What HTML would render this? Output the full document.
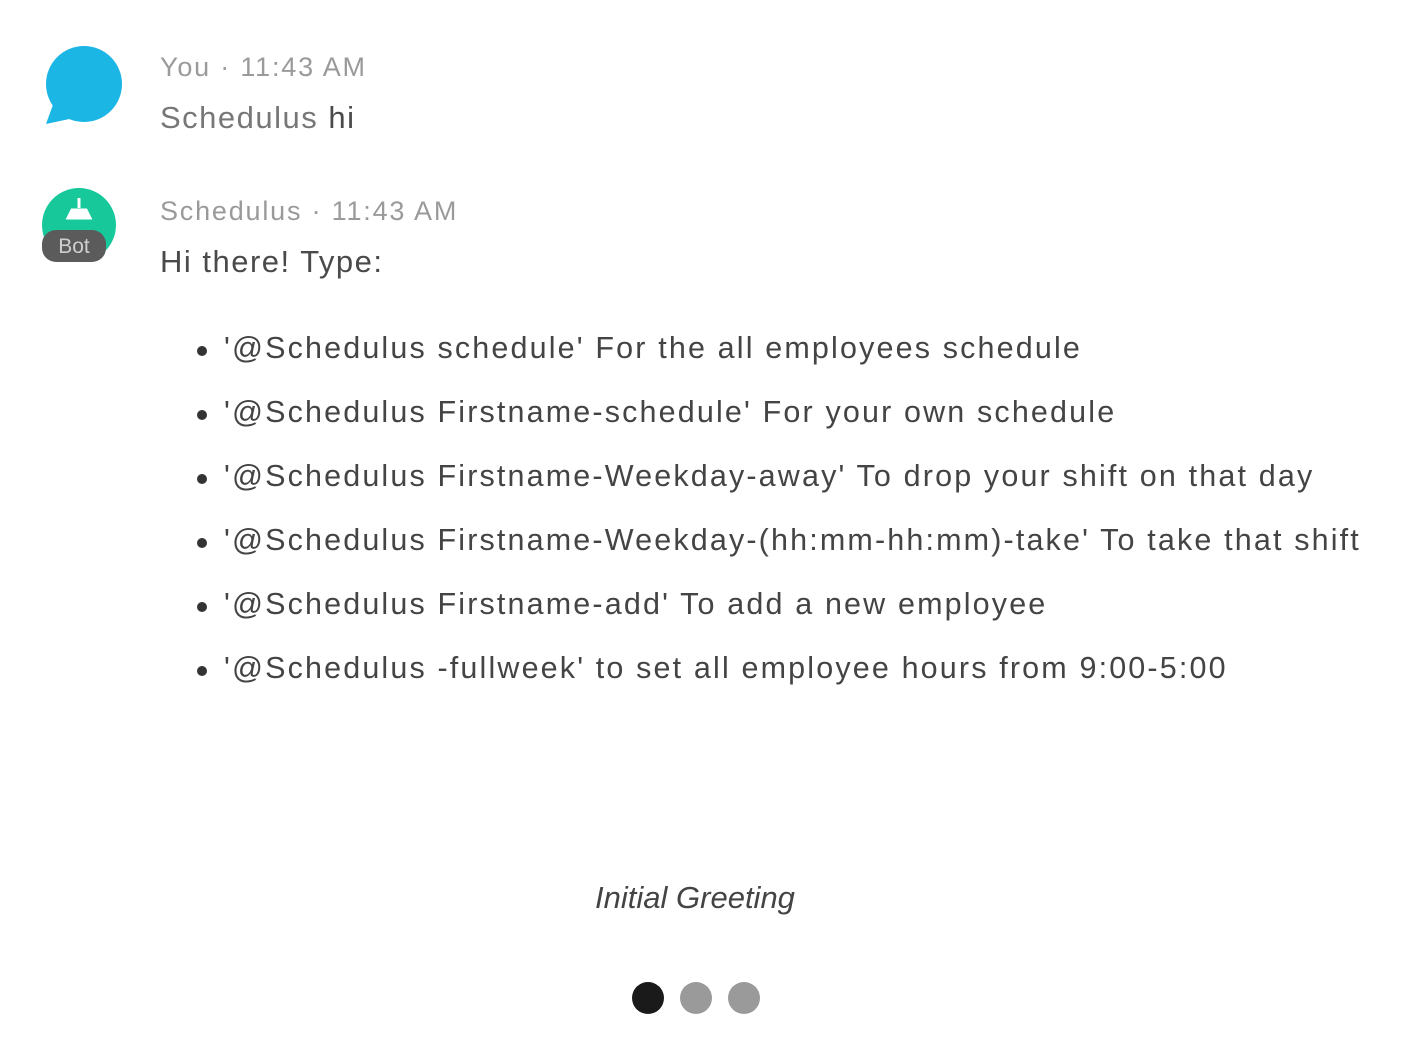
<!DOCTYPE html>
<html><head><meta charset="utf-8"><style>
body{margin:0;width:1420px;height:1038px;background:#fff;font-family:"Liberation Sans",sans-serif;position:relative;overflow:hidden}
.a{position:absolute;white-space:nowrap}
.meta{color:#9a9a9a;font-size:27px;letter-spacing:1.8px}
.msg{color:#4a4a4a;font-size:31px;letter-spacing:1.5px}
.li{position:absolute;left:224px;color:#444;font-size:30.5px;white-space:nowrap;letter-spacing:2.15px}
.dot{position:absolute;left:197px;width:10px;height:10px;border-radius:50%;background:#333}
.pg{position:absolute;top:982px;width:32px;height:32px;border-radius:50%}
</style></head><body>
<svg class="a" style="left:44px;top:46px" width="80" height="80" viewBox="0 0 80 80">
<circle cx="40" cy="38" r="38" fill="#1bb6e4"/>
<path d="M10 56 L2 78 L30 72 Z" fill="#1bb6e4"/>
</svg>
<div class="a meta" style="left:160px;top:52px">You · 11:43 AM</div>
<div class="a msg" style="left:160px;top:100px"><span style="color:#777">Schedulus</span> hi</div>

<svg class="a" style="left:40px;top:188px" width="80" height="76" viewBox="0 0 80 76">
<circle cx="39" cy="37" r="37" fill="#17c89a"/>
<path d="M39 10 v10 M32 22 h14 l4 8 h-22 z" stroke="#fff" stroke-width="3" fill="#fff"/>
<rect x="2" y="42" width="64" height="32" rx="14" fill="#5b5b5b"/>
<text x="34" y="65" fill="#cfcfcf" font-size="21" font-family="Liberation Sans" text-anchor="middle">Bot</text>
</svg>
<div class="a meta" style="left:160px;top:196px">Schedulus · 11:43 AM</div>
<div class="a msg" style="left:160px;top:244px">Hi there! Type:</div>

<div class="dot" style="top:346px"></div><div class="li" style="top:331px">'@Schedulus schedule' For the all employees schedule</div>
<div class="dot" style="top:410px"></div><div class="li" style="top:395px">'@Schedulus Firstname-schedule' For your own schedule</div>
<div class="dot" style="top:474px"></div><div class="li" style="top:459px">'@Schedulus Firstname-Weekday-away' To drop your shift on that day</div>
<div class="dot" style="top:538px"></div><div class="li" style="top:523px">'@Schedulus Firstname-Weekday-(hh:mm-hh:mm)-take' To take that shift</div>
<div class="dot" style="top:602px"></div><div class="li" style="top:587px">'@Schedulus Firstname-add' To add a new employee</div>
<div class="dot" style="top:666px"></div><div class="li" style="top:651px">'@Schedulus -fullweek' to set all employee hours from 9:00-5:00</div>

<div class="a" style="left:0;width:1390px;text-align:center;top:880px;font-size:31px;font-style:italic;color:#444">Initial Greeting</div>
<div class="pg" style="left:632px;background:#1a1a1a"></div>
<div class="pg" style="left:680px;background:#9a9a9a"></div>
<div class="pg" style="left:728px;background:#9a9a9a"></div>
</body></html>
